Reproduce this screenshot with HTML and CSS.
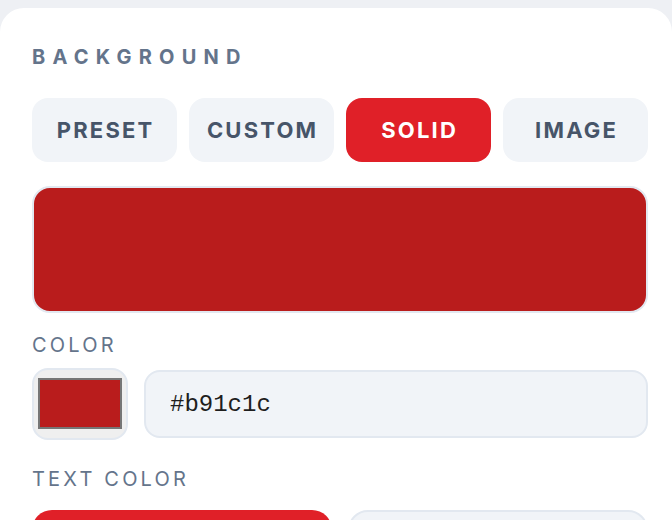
FILE: index.html
```html
<!DOCTYPE html>
<html lang="en">
<head>
<meta charset="utf-8">
<title>Background settings</title>
<link rel="stylesheet" href="styles.css">
</head>
<body>
<div class="card">
  <h2 class="section-title">BACKGROUND</h2>
  <div class="tabs">
    <button class="tab">PRESET</button>
    <button class="tab">CUSTOM</button>
    <button class="tab tab-active">SOLID</button>
    <button class="tab">IMAGE</button>
  </div>
  <div class="preview"></div>
  <div class="field-label label-color">COLOR</div>
  <div class="color-row">
    <div class="swatch-btn"><div class="swatch"></div></div>
    <div class="hex-input">#b91c1c</div>
  </div>
  <div class="field-label label-text">TEXT COLOR</div>
  <div class="text-colors">
    <div class="tc tc-red"></div>
    <div class="tc tc-light"></div>
  </div>
</div>
</body>
</html>
```

FILE: styles.css
```css
* { box-sizing: border-box; }
html, body { margin: 0; padding: 0; }
body {
  background: #eef0f4;
  padding-top: 8px;
  font-family: Inter, "Liberation Sans", sans-serif;
  overflow: hidden;
  height: 520px;
}
.card {
  background: #ffffff;
  border-radius: 24px 24px 0 0;
  padding: 39px 24px 40px 32px;
  min-height: 600px;
}
.section-title {
  margin: 0;
  font-size: 20px;
  line-height: 20px;
  font-weight: 700;
  letter-spacing: 0.36em;
  color: #64748b;
}
.tabs {
  margin-top: 31px;
  display: grid;
  grid-template-columns: repeat(4, 1fr);
  gap: 12px;
}
.tab {
  height: 64px;
  border: none;
  border-radius: 16px;
  background: #f1f4f8;
  color: #475569;
  font-family: Inter, "Liberation Sans", sans-serif;
  font-size: 22px;
  font-weight: 700;
  letter-spacing: 0.1em;
  padding: 0 0 0 0.1em;
}
.tab-active {
  background: #e02028;
  color: #ffffff;
}
.preview {
  margin-top: 24px;
  height: 127px;
  background: #b91c1c;
  border: 2px solid #e2e8f0;
  border-radius: 18px;
}
.field-label {
  font-size: 20px;
  line-height: 20px;
  font-weight: 400;
  letter-spacing: 0.16em;
  color: #64748b;
}
.label-color { margin-top: 22px; }
.label-text { margin-top: 29px; }
.color-row {
  margin-top: 13px;
  display: flex;
  align-items: center;
  gap: 16px;
}
.swatch-btn {
  width: 96px;
  height: 72px;
  flex: none;
  background: #efefef;
  border: 2px solid #e2e8f0;
  border-radius: 16px;
  padding: 8px 4px 9px 4px;
}
.swatch {
  width: 100%;
  height: 100%;
  background: #b91c1c;
  border: 2px solid #767676;
}
.hex-input {
  flex: 1;
  height: 68px;
  background: #f1f4f8;
  border: 2px solid #e2e8f0;
  border-radius: 16px;
  padding: 0 24px;
  display: flex;
  align-items: center;
  font-family: "Liberation Mono", monospace;
  font-size: 24px;
  color: #1e1e1e;
}
.text-colors {
  margin-top: 21px;
  display: grid;
  grid-template-columns: 1fr 1fr;
  gap: 16px;
}
.tc {
  height: 64px;
  border-radius: 20px;
}
.tc-red { background: #e02028; }
.tc-light { background: #f1f4f8; border: 2px solid #e2e8f0; }
```
